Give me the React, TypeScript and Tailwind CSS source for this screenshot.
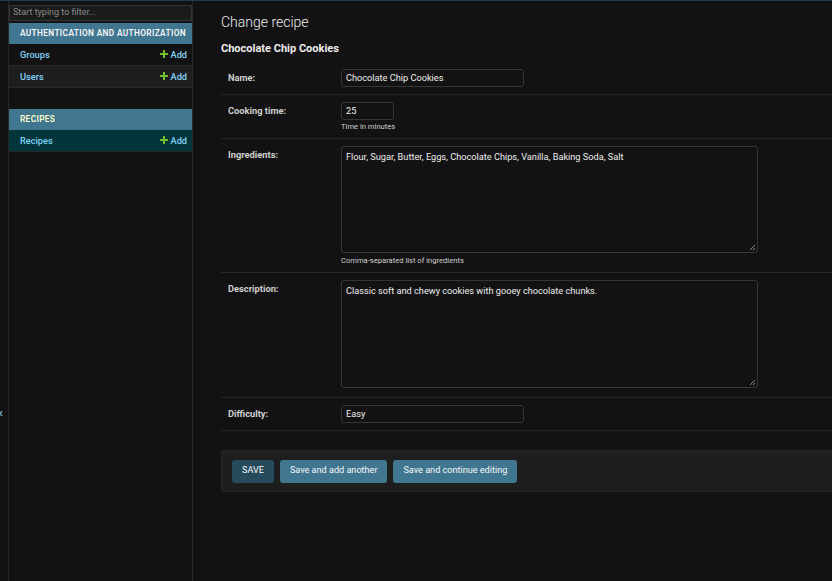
import React from 'react';

const font = { fontFamily: 'Roboto, "Noto Sans", "Liberation Sans", sans-serif' };

type Model = { name: string; alt?: boolean; selected?: boolean };

function AddLink() {
  return (
    <span className="flex items-center gap-[3px] text-[#81d4fa]">
      <svg width="8" height="8" viewBox="0 0 8 8">
        <path d="M3 0h2v3h3v2H5v3H3V5H0V3h3z" fill="#70bf2b" />
      </svg>
      Add
    </span>
  );
}

function AppModule({ title, current, models }: { title: string; current?: boolean; models: Model[] }) {
  return (
    <div className="mb-[21px]">
      <div
        className={`h-[21px] flex items-center pl-[11px] bg-[#417690] text-[8.3px] font-semibold tracking-[0.35px] whitespace-nowrap ${
          current ? 'text-[#ffffcc]' : 'text-[#f7f7f7]'
        }`}
      >
        {title}
      </div>
      {models.map((m) => (
        <div
          key={m.name}
          className={`h-[22px] flex items-center justify-between pl-[11px] pr-[5px] border-b border-[#272727] text-[9.2px] font-medium ${
            m.selected ? 'bg-[#00363a]' : m.alt ? 'bg-[#1e1e1e]' : 'bg-[#121212]'
          }`}
        >
          <span className="text-[#81d4fa]">{m.name}</span>
          <AddLink />
        </div>
      ))}
    </div>
  );
}

function Row({
  label,
  children,
  help,
  helpGap = 'mt-[2px]',
}: {
  label: string;
  children: React.ReactNode;
  help?: string;
  helpGap?: string;
}) {
  return (
    <div className="flex py-[7px] border-b border-[#272727]">
      <div className="w-[120px] shrink-0 pl-[7px] pt-[3px] text-[9.3px] font-bold text-[#d0d0d0] leading-[12px]">
        {label}
      </div>
      <div className="flex flex-col">
        {children}
        {help && <div className={`${helpGap} text-[7.6px] leading-[9px] text-[#d0d0d0]`}>{help}</div>}
      </div>
    </div>
  );
}

function TextInput({ value, width }: { value: string; width: string }) {
  return (
    <div
      className={`${width} h-[18px] border border-[#353535] rounded-[3px] bg-[#121212] px-[4px] flex items-center text-[9.2px] text-[#eeeeee]`}
    >
      {value}
    </div>
  );
}

function TextArea({ value, height }: { value: string; height: string }) {
  return (
    <div
      className={`relative w-[417px] ${height} border border-[#353535] rounded-[3px] bg-[#121212] px-[4px] pt-[4px] text-[9.2px] leading-[12px] text-[#eeeeee]`}
    >
      {value}
      <svg className="absolute right-[1px] bottom-[1px]" width="7" height="7" viewBox="0 0 7 7">
        <path d="M6 1L1 6M6 4L4 6" stroke="#aaaaaa" strokeWidth="0.8" />
      </svg>
    </div>
  );
}

function Button({ children, dark }: { children: React.ReactNode; dark?: boolean }) {
  return (
    <div
      className={`h-[23px] flex items-center px-[10px] rounded-[3px] text-[9.1px] text-[#f7f7f7] ${
        dark ? 'bg-[#264b5d]' : 'bg-[#417690]'
      }`}
    >
      {children}
    </div>
  );
}

export default function App() {
  return (
    <div className="w-[832px] h-[581px] overflow-hidden bg-[#121212] border-t border-[#1f3a48] flex" style={font}>
      {/* toggle column */}
      <div className="w-[9px] shrink-0 border-r border-[#272727] overflow-hidden">
        <div className="pt-[402px] -ml-[3px] text-[13px] text-[#81d4fa] leading-[20px]">«</div>
      </div>

      {/* nav sidebar */}
      <div className="w-[184px] shrink-0 border-r border-[#2a2a2a] flex flex-col">
        <div className="mt-[4px] mb-[2px] h-[16px] border border-[#353535] bg-[#1b1b1b] flex items-center px-[3px] text-[9px] text-[#8a8a8a]">
          Start typing to filter...
        </div>
        <AppModule
          title="AUTHENTICATION AND AUTHORIZATION"
          models={[{ name: 'Groups' }, { name: 'Users', alt: true }]}
        />
        <AppModule title="RECIPES" current models={[{ name: 'Recipes', selected: true }]} />
      </div>

      {/* main content */}
      <div className="flex-1 min-w-0 pl-[28px] pt-[13px]">
        <h1 className="text-[14px] font-light leading-[17px] text-[#eeeeee]">Change recipe</h1>
        <h2 className="mt-[11px] text-[11px] font-bold leading-[14px] text-[#eeeeee]">Chocolate Chip Cookies</h2>

        <div className="mt-[6px]">
          <Row label="Name:">
            <TextInput value="Chocolate Chip Cookies" width="w-[183px]" />
          </Row>
          <Row label="Cooking time:" help="Time in minutes">
            <TextInput value="25" width="w-[53px]" />
          </Row>
          <Row label="Ingredients:" help="Comma-separated list of ingredients" helpGap="mt-[3px]">
            <TextArea
              value="Flour, Sugar, Butter, Eggs, Chocolate Chips, Vanilla, Baking Soda, Salt"
              height="h-[107px]"
            />
          </Row>
          <Row label="Description:">
            <div className="pb-[2px]">
              <TextArea value="Classic soft and chewy cookies with gooey chocolate chunks." height="h-[108px]" />
            </div>
          </Row>
          <Row label="Difficulty:">
            <TextInput value="Easy" width="w-[183px]" />
          </Row>
        </div>

        <div className="mt-[19px] h-[42px] border border-[#272727] border-r-0 rounded-l-[3px] bg-[#1e1e1e] flex items-center gap-[6px] pl-[10px]">
          <Button dark>SAVE</Button>
          <Button>Save and add another</Button>
          <Button>Save and continue editing</Button>
        </div>
      </div>
    </div>
  );
}
